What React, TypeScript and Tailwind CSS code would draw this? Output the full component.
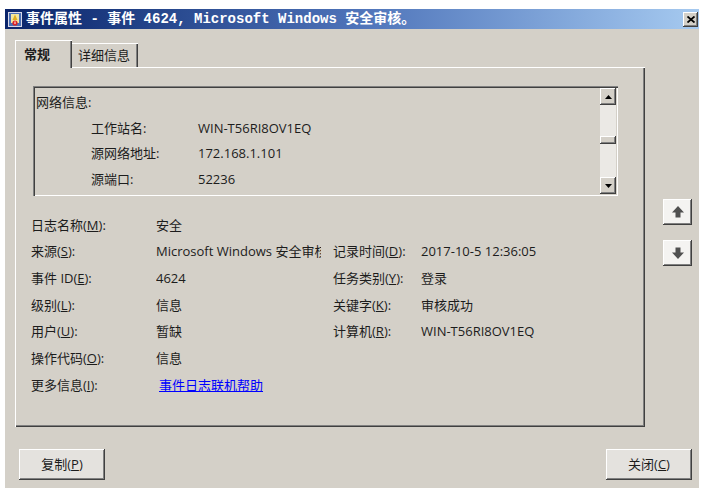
import React from 'react'

const font = { fontFamily: '"Open Sans", "Noto Sans CJK SC", sans-serif' }

const raised = 'shadow-[inset_-1px_-1px_#404040,inset_1px_1px_#ffffff,inset_-2px_-2px_#808080]'

function Key({ label, k }: { label: string; k: string }) {
  return (
    <span>
      {label}(<span className="underline">{k}</span>):
    </span>
  )
}

function TitleIcon() {
  return (
    <svg width="14" height="15" viewBox="0 0 14 15">
      <rect x="0.5" y="0.5" width="13" height="14" fill="#4a6fb5" stroke="#d8d8e8" />
      <rect x="3" y="2" width="8" height="9" fill="#f3e7a0" />
      <path d="M7 2.5 L9.5 8 L4.5 8 Z" fill="#e0b020" />
      <circle cx="7" cy="11" r="2.6" fill="#d22" />
      <rect x="6.5" y="9.5" width="1" height="2.5" fill="#fff" />
    </svg>
  )
}

function ArrowButton({ down }: { down?: boolean }) {
  return (
    <div className={`w-[29px] h-[26px] bg-[#f4f3f1] flex items-center justify-center ${raised}`}>
      <svg width="14" height="14" viewBox="0 0 14 14" className={down ? 'rotate-180' : ''}>
        <path d="M7 1 L13 7.5 L9.5 7.5 L9.5 12.5 L4.5 12.5 L4.5 7.5 L1 7.5 Z" fill="#505050" />
      </svg>
    </div>
  )
}

function ScrollArrow({ down }: { down?: boolean }) {
  return (
    <div className={`w-[16px] h-[17px] bg-[#d4d0c8] flex items-center justify-center ${raised}`}>
      <svg width="7" height="4" viewBox="0 0 7 4" className={down ? 'rotate-180' : ''}>
        <path d="M3.5 0 L7 4 L0 4 Z" fill="#000" />
      </svg>
    </div>
  )
}

const netRows = [
  ['工作站名:', 'WIN-T56RI8OV1EQ'],
  ['源网络地址:', '172.168.1.101'],
  ['源端口:', '52236'],
]

type Cell = { label: string; k: string; value: React.ReactNode }

const rows: { left: Cell; right?: Cell }[] = [
  { left: { label: '日志名称', k: 'M', value: '安全' } },
  {
    left: { label: '来源', k: 'S', value: 'Microsoft Windows 安全审核' },
    right: { label: '记录时间', k: 'D', value: '2017-10-5 12:36:05' },
  },
  {
    left: { label: '事件 ID', k: 'E', value: '4624' },
    right: { label: '任务类别', k: 'Y', value: '登录' },
  },
  {
    left: { label: '级别', k: 'L', value: '信息' },
    right: { label: '关键字', k: 'K', value: '审核成功' },
  },
  {
    left: { label: '用户', k: 'U', value: '暂缺' },
    right: { label: '计算机', k: 'R', value: 'WIN-T56RI8OV1EQ' },
  },
  { left: { label: '操作代码', k: 'O', value: '信息' } },
  {
    left: {
      label: '更多信息',
      k: 'I',
      value: <span className="ml-[3px] text-[#0000ff] underline">事件日志联机帮助</span>,
    },
  },
]

export default function App() {
  return (
    <div className="w-[714px] h-[496px] bg-white pt-[9px] pl-[5px] text-[13px] text-[#1c1c1c]" style={font}>
      <div className="w-[694px] h-[479px] bg-[#d4d0c8] flex flex-col">
        {/* title bar */}
        <div className="h-[20px] flex items-center bg-gradient-to-r from-[#0a246a] via-[#4d72b8] to-[#a6caf0] pl-[3px] pr-[1px]">
          <TitleIcon />
          <span
            className="ml-[4px] text-white font-bold text-[14px] whitespace-nowrap"
            style={{ fontFamily: '"Liberation Mono", "Noto Sans CJK SC", monospace' }}
          >
            事件属性 - 事件 4624, Microsoft Windows 安全审核。
          </span>
          <div className={`ml-auto w-[15px] h-[15px] bg-[#d4d0c8] flex items-center justify-center ${raised}`}>
            <svg width="8" height="7" viewBox="0 0 8 7">
              <path d="M0.5 0.5 L7.5 6.5 M7.5 0.5 L0.5 6.5" stroke="#000" strokeWidth="1.8" />
            </svg>
          </div>
        </div>

        <div className="flex pl-[10px] pt-[11px]">
          <div className="w-[630px] flex flex-col">
            {/* tabs */}
            <div className="h-[27px] flex items-end">
              <div className="relative z-10 w-[57px] h-[28px] -mb-[1px] bg-[#d4d0c8] border-l border-t border-white shadow-[inset_-1px_0_#404040,inset_-2px_0_#808080] pl-[8px] pt-[4px] font-semibold">
                常规
              </div>
              <div className="w-[66px] h-[24px] border-t border-white shadow-[inset_-1px_0_#404040,inset_-2px_0_#808080] pl-[6px] pt-[2px]">
                详细信息
              </div>
            </div>
            {/* panel */}
            <div className="h-[360px] border-l border-t border-white shadow-[inset_-1px_-1px_#404040,inset_-2px_-2px_#808080] pl-[15px] pt-[18px]">
              <div className="ml-[2px] w-[585px] h-[110px] flex shadow-[inset_1px_1px_#808080,inset_2px_2px_#404040,inset_-1px_-1px_#ffffff] p-[2px]">
                <div className="flex-1 overflow-hidden pl-[1px] pt-[2px]">
                  <div className="h-[25.5px] flex items-center">网络信息:</div>
                  {netRows.map(([l, v]) => (
                    <div key={l} className="h-[25.5px] flex items-center">
                      <span className="ml-[55px] w-[107px]">{l}</span>
                      <span>{v}</span>
                    </div>
                  ))}
                </div>
                <div className="w-[16px] flex flex-col bg-[#ebe9e5]">
                  <ScrollArrow />
                  <div className="flex-1 flex flex-col">
                    <div className="h-[31px]" />
                    <div className={`h-[8px] bg-[#d4d0c8] ${raised}`} />
                  </div>
                  <ScrollArrow down />
                </div>
              </div>
              <div className="pt-[16px]">
                {rows.map((r, i) => (
                  <div key={i} className="h-[26.67px] flex items-center whitespace-nowrap">
                    <span className="w-[125px]">
                      <Key label={r.left.label} k={r.left.k} />
                    </span>
                    <span className="w-[165px] overflow-hidden">{r.left.value}</span>
                    {r.right && (
                      <>
                        <span className="ml-[12px] w-[88px]">
                          <Key label={r.right.label} k={r.right.k} />
                        </span>
                        <span>{r.right.value}</span>
                      </>
                    )}
                  </div>
                ))}
              </div>
            </div>
          </div>
          {/* navigation arrows */}
          <div className="ml-[18px] pt-[159px] flex flex-col gap-[15px]">
            <ArrowButton />
            <ArrowButton down />
          </div>
        </div>

        {/* buttons */}
        <div className="mt-[22px] pl-[14px] pr-[7px] flex justify-between">
          <button className={`w-[86px] h-[31px] bg-[#e4e2de] ${raised}`}>
            复制(<span className="underline">P</span>)
          </button>
          <button className={`w-[86px] h-[31px] bg-[#e4e2de] ${raised}`}>
            关闭(<span className="underline">C</span>)
          </button>
        </div>
      </div>
    </div>
  )
}
